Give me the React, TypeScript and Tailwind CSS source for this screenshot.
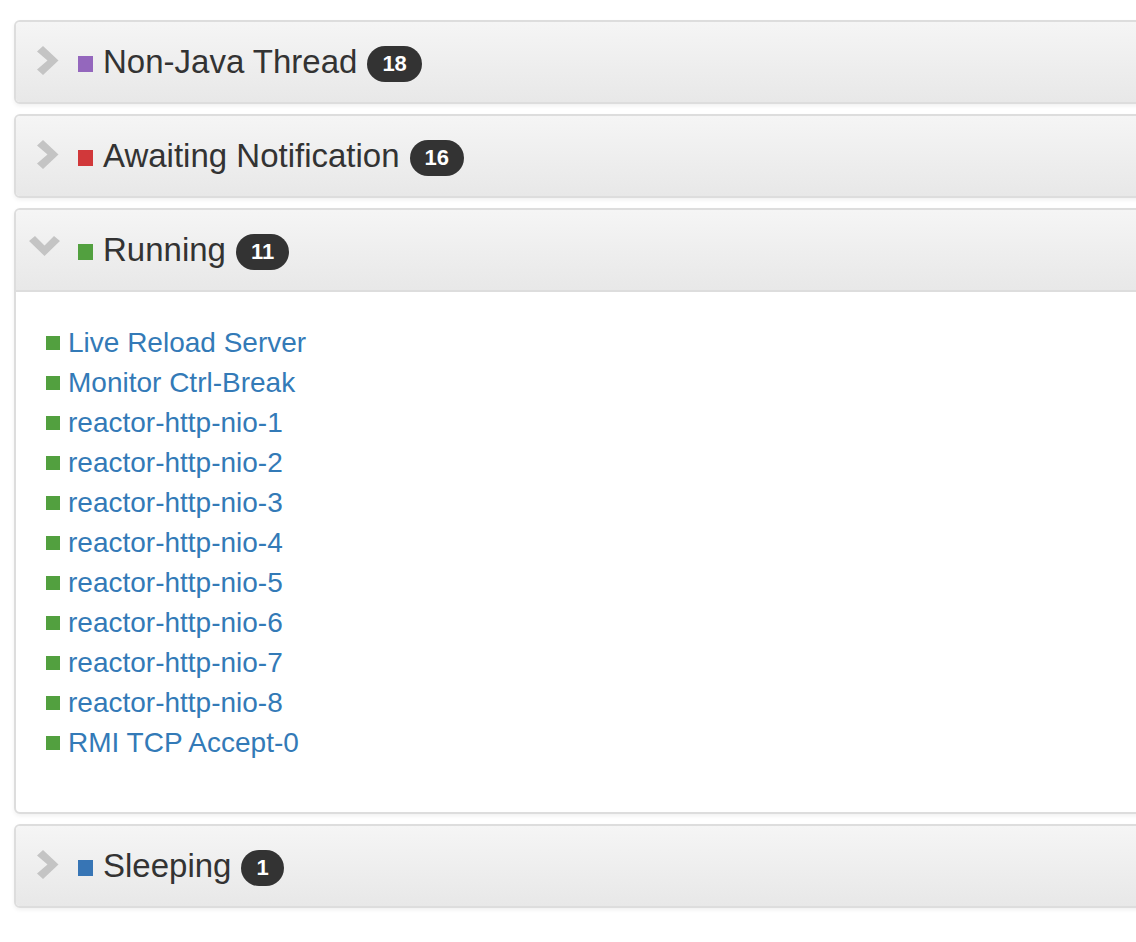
import React from 'react';

type Group = {
    name: string;
    count: number;
    color: string;
    open?: boolean;
    threads?: string[];
};

const groups: Group[] = [
    { name: 'Non-Java Thread', count: 18, color: 'bg-[#9467bd]' },
    { name: 'Awaiting Notification', count: 16, color: 'bg-[#d1383a]' },
    {
        name: 'Running',
        count: 11,
        color: 'bg-[#52a03f]',
        open: true,
        threads: [
            'Live Reload Server',
            'Monitor Ctrl-Break',
            'reactor-http-nio-1',
            'reactor-http-nio-2',
            'reactor-http-nio-3',
            'reactor-http-nio-4',
            'reactor-http-nio-5',
            'reactor-http-nio-6',
            'reactor-http-nio-7',
            'reactor-http-nio-8',
            'RMI TCP Accept-0',
        ],
    },
    { name: 'Sleeping', count: 1, color: 'bg-[#3775b5]' },
];

const ChevronRight = () => (
    <svg width="22" height="29" viewBox="0 0 22 29" className="ml-[8px] -mt-[3px]">
        <polygon points="0,5.5 6,0 21.5,14.5 6,29 0,23.5 10.5,14.5" fill="#c4c4c4" />
    </svg>
);

const ChevronDown = () => (
    <svg width="31" height="20" viewBox="0 0 31 20" className="-mt-[8px]">
        <polygon points="0,5 6,0 15.5,9.5 25,0 31,5 15.5,20" fill="#c4c4c4" />
    </svg>
);

const Panel: React.FC<{ group: Group }> = ({ group }) => (
    <div className="mb-[10px] rounded-[6px] border-2 border-[#dddddd] bg-white shadow-[0_2px_4px_rgba(0,0,0,0.06)] overflow-hidden">
        <div
            className={`h-[80px] flex items-center pl-[13px] bg-linear-to-b from-[#f5f5f5] to-[#e8e8e8] ${
                group.open ? 'border-b-2 border-[#dddddd] box-content' : ''
            }`}
        >
            <div className="w-[49px] flex items-center">
                {group.open ? <ChevronDown /> : <ChevronRight />}
            </div>
            <span className={`w-[15px] h-[16px] mt-[4px] ${group.color}`} />
            <span className="ml-[10px] text-[33px] leading-none text-[#333333] -mt-[2px]">{group.name}</span>
            <span className="ml-[10px] mt-[4px] h-[36px] px-[15px] rounded-full bg-[#333333] text-white text-[22px] font-bold flex items-center leading-none">
                {group.count}
            </span>
        </div>
        {group.open && group.threads && (
            <ul className="pl-[30px] pt-[31px] pb-[49px]">
                {group.threads.map((t) => (
                    <li key={t} className="h-[40px] flex items-center">
                        <span className={`w-[14px] h-[14px] ${group.color}`} />
                        <a href="#" className="ml-[8px] text-[28px] leading-none text-[#337ab7]">
                            {t}
                        </a>
                    </li>
                ))}
            </ul>
        )}
    </div>
);

export default function App() {
    return (
        <div className="w-full min-h-screen bg-white overflow-hidden pt-[20px] font-['Liberation_Sans',Arial,sans-serif]">
            <div className="ml-[14px] w-[1140px]">
                {groups.map((g) => (
                    <Panel key={g.name} group={g} />
                ))}
            </div>
        </div>
    );
}
